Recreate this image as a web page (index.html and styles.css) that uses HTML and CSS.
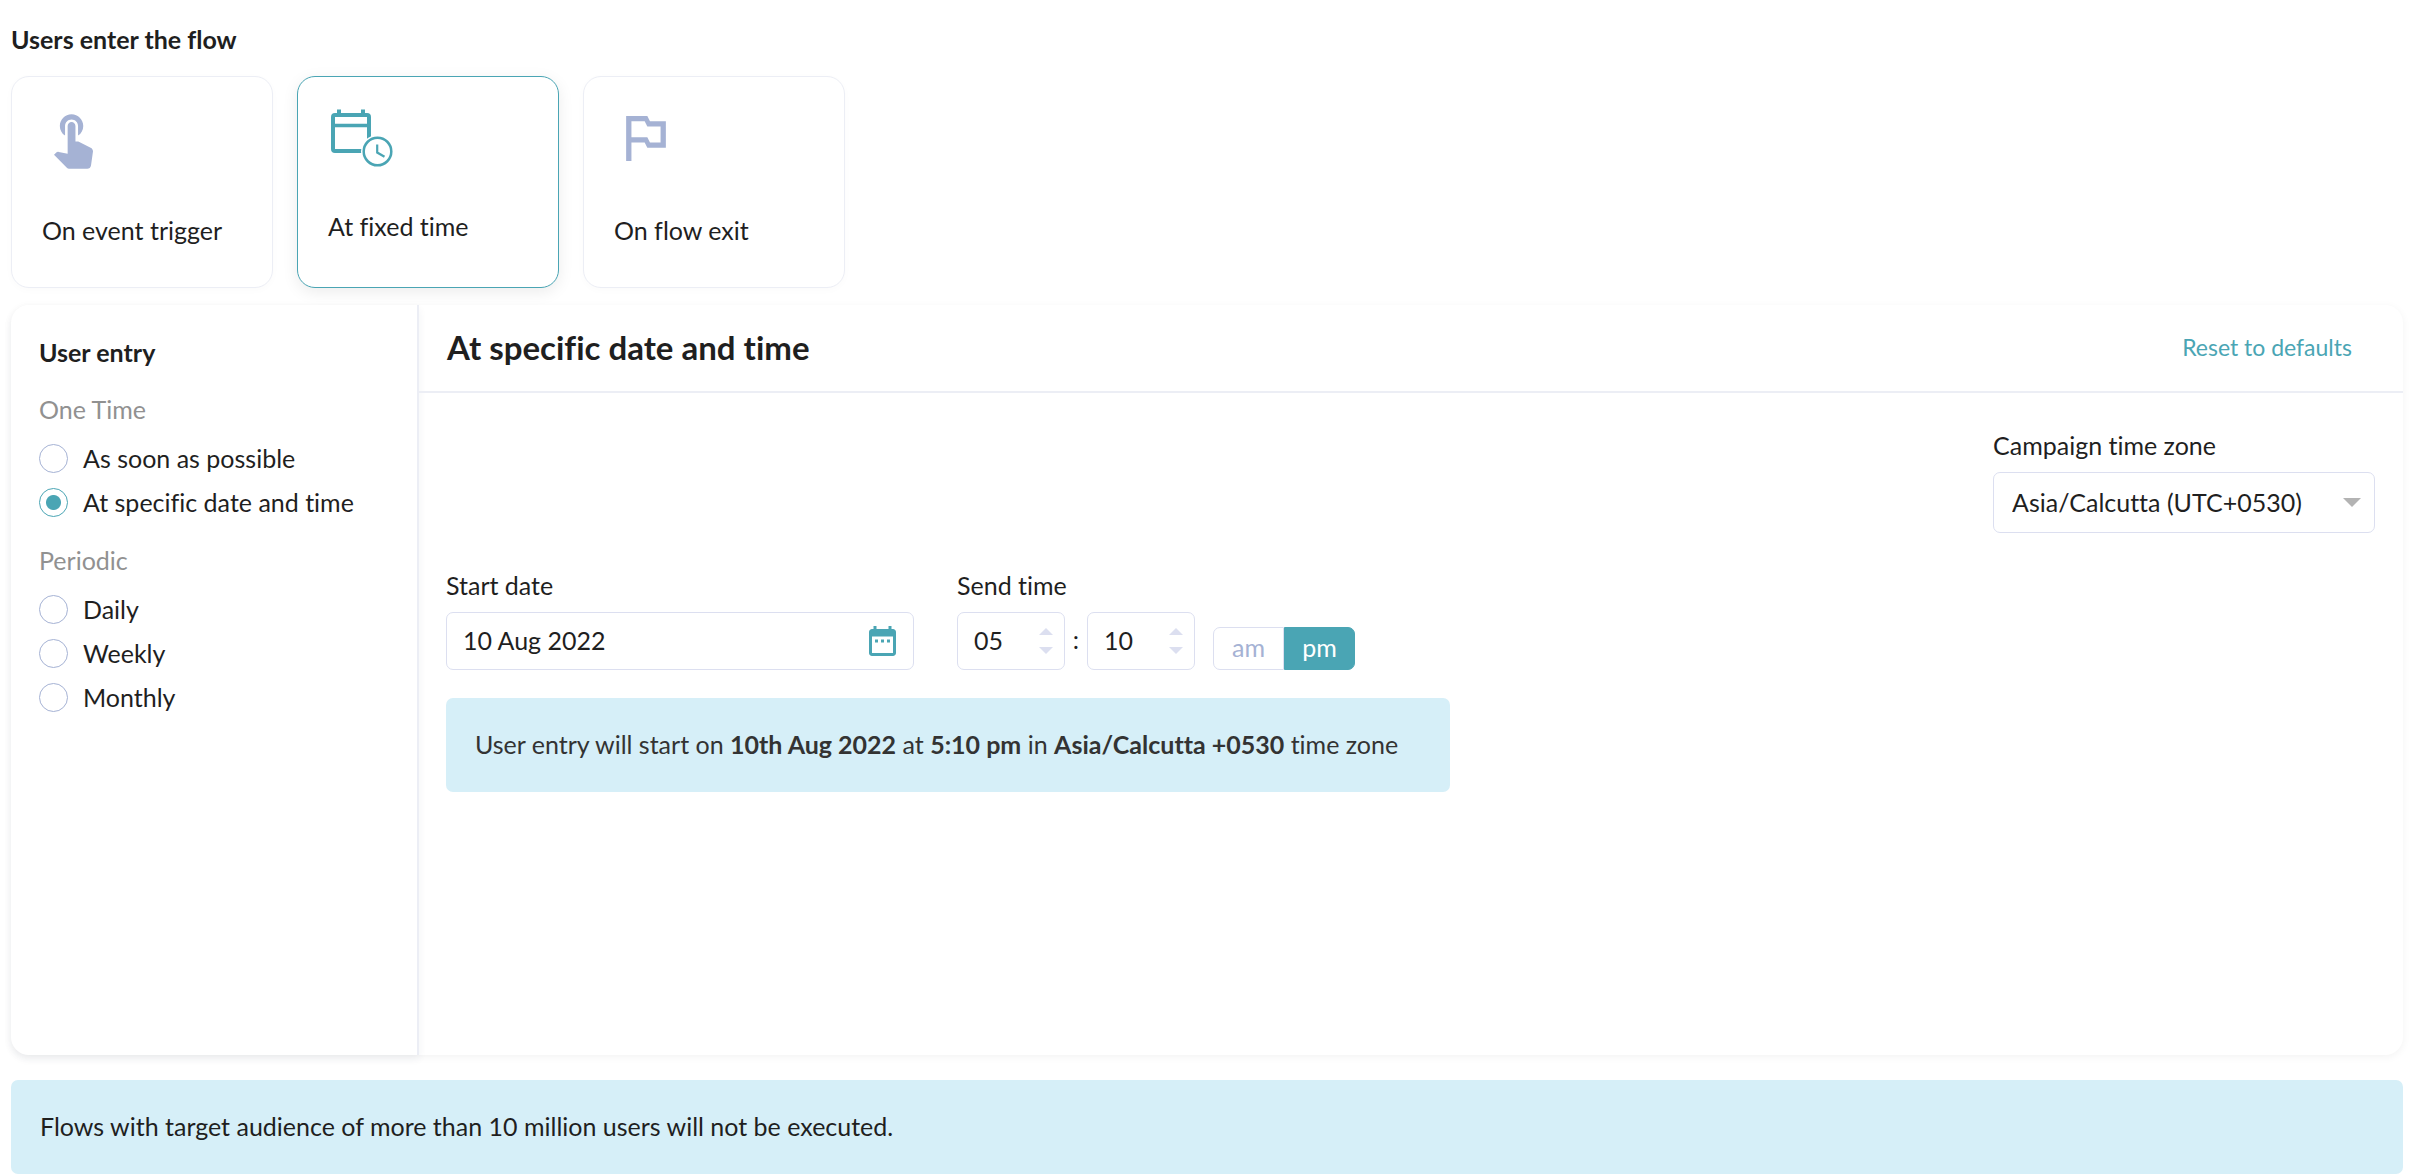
FILE: index.html
```html
<!DOCTYPE html>
<html lang="en">
<head>
<meta charset="utf-8">
<meta name="viewport" content="width=device-width, initial-scale=1">
<title>Users enter the flow</title>
<link rel="stylesheet" href="styles.css">
</head>
<body>
<main class="page">
  <h1 class="page-title">Users enter the flow</h1>

  <div class="triggers">
    <button type="button" class="trigger" aria-pressed="false">
      <span class="trigger-icon">
        <svg class="icon-touch" viewBox="4.75 3 15 21" aria-hidden="true"><path fill="currentColor" d="M9 11.24V7.5C9 6.12 10.12 5 11.5 5S14 6.12 14 7.5v3.74c1.21-.81 2-2.18 2-3.74C16 5.01 13.99 3 11.5 3S7 5.01 7 7.5c0 1.56.79 2.93 2 3.74zm9.84 4.63l-4.54-2.26c-.17-.07-.35-.11-.54-.11H13v-6c0-.83-.67-1.5-1.5-1.5S10 6.67 10 7.5v10.74l-3.43-.72c-.08-.01-.15-.03-.24-.03-.31 0-.59.13-.79.33l-.79.8 4.94 4.94c.27.27.65.44 1.06.44h6.79c.75 0 1.33-.55 1.44-1.28l.75-5.27c.01-.07.02-.14.02-.2 0-.62-.38-1.16-.91-1.38z"/></svg>
      </span>
      <span>On event trigger</span>
    </button>
    <button type="button" class="trigger trigger-active" aria-pressed="true">
      <span class="trigger-icon">
        <svg class="icon-schedule" viewBox="0 0 63 58" aria-hidden="true">
          <g fill="none" stroke="currentColor">
            <rect x="2" y="6" width="36" height="36" rx="2" stroke-width="4"/>
            <path d="M2 16.500H38" stroke-width="3.400"/>
            <path d="M8 0.500V6M32 0.500V6" stroke-width="4"/>
            <circle cx="46.500" cy="42.500" r="16.500" fill="#fff" stroke="none"/>
            <circle cx="46.500" cy="42.500" r="13.800" stroke-width="2.500"/>
            <path d="M46.200 35.500V43.500L53.500 47.800" stroke-width="2.200"/>
          </g>
        </svg>
      </span>
      <span>At fixed time</span>
    </button>
    <button type="button" class="trigger" aria-pressed="false">
      <span class="trigger-icon">
        <svg class="icon-flag" viewBox="5 3.25 15 17.75" aria-hidden="true"><path fill="currentColor" d="M14 6l-1-2H5v17h2v-7h5l1 2h7V6h-6zm4 8h-4l-1-2H7V6h5l1 2h5v6z"/></svg>
      </span>
      <span>On flow exit</span>
    </button>
  </div>

  <section class="panel">
    <aside class="sidebar">
      <h2 class="sidebar-title">User entry</h2>
      <fieldset class="group">
        <legend class="group-title">One Time</legend>
        <label class="option"><input class="radio" type="radio" name="entry">As soon as possible</label>
        <label class="option"><input class="radio" type="radio" name="entry" checked>At specific date and time</label>
      </fieldset>
      <fieldset class="group">
        <legend class="group-title">Periodic</legend>
        <label class="option"><input class="radio" type="radio" name="entry">Daily</label>
        <label class="option"><input class="radio" type="radio" name="entry">Weekly</label>
        <label class="option"><input class="radio" type="radio" name="entry">Monthly</label>
      </fieldset>
    </aside>

    <div class="content">
      <header class="content-header">
        <h2 class="content-title">At specific date and time</h2>
        <a class="reset" href="#">Reset to defaults</a>
      </header>
      <div class="content-body">
        <div class="field zone">
          <label for="zone">Campaign time zone</label>
          <div class="select-wrap">
            <select class="control select" id="zone"><option>Asia/Calcutta (UTC+0530)</option></select>
            <svg class="caret" viewBox="0 0 18 9" aria-hidden="true"><path fill="currentColor" d="M0 0h18L9 9z"/></svg>
          </div>
        </div>

        <div class="schedule">
          <div class="field date">
            <label for="date">Start date</label>
            <div class="control combo">
              <input class="date-input" id="date" type="text" value="10 Aug 2022">
              <button type="button" class="icon-button" aria-label="Open calendar">
                <svg class="icon-date" viewBox="3 2 18 20" aria-hidden="true"><path fill="currentColor" d="M9 11H7v2h2v-2zm4 0h-2v2h2v-2zm4 0h-2v2h2v-2zm2-7h-1V2h-2v2H8V2H6v2H5c-1.110 0-1.990.9-1.990 2L3 20c0 1.100.89 2 2 2h14c1.100 0 2-.9 2-2V6c0-1.100-.9-2-2-2zm0 16H5V9h14v11z"/></svg>
              </button>
            </div>
          </div>
          <div class="field">
            <label for="hour">Send time</label>
            <div class="time">
              <div class="control combo spinner">
                <input class="number" id="hour" type="text" inputmode="numeric" value="05">
                <div class="steps">
                  <button type="button" class="step" aria-label="Hour up"><svg viewBox="0 0 14 7" aria-hidden="true"><path fill="currentColor" d="M0 7h14L7 0z"/></svg></button>
                  <button type="button" class="step" aria-label="Hour down"><svg viewBox="0 0 14 7" aria-hidden="true"><path fill="currentColor" d="M0 0h14L7 7z"/></svg></button>
                </div>
              </div>
              <span class="colon">:</span>
              <div class="control combo spinner">
                <input class="number" type="text" inputmode="numeric" value="10" aria-label="Minutes">
                <div class="steps">
                  <button type="button" class="step" aria-label="Minutes up"><svg viewBox="0 0 14 7" aria-hidden="true"><path fill="currentColor" d="M0 7h14L7 0z"/></svg></button>
                  <button type="button" class="step" aria-label="Minutes down"><svg viewBox="0 0 14 7" aria-hidden="true"><path fill="currentColor" d="M0 0h14L7 7z"/></svg></button>
                </div>
              </div>
              <div class="meridiem">
                <button type="button" class="half" aria-pressed="false">am</button>
                <button type="button" class="half half-active" aria-pressed="true">pm</button>
              </div>
            </div>
          </div>
        </div>

        <p class="notice summary">User entry will start on <b>10th Aug 2022</b> at <b>5:10 pm</b> in <b>Asia/Calcutta +0530</b> time zone</p>
      </div>
    </div>
  </section>

  <p class="notice">Flows with target audience of more than 10 million users will not be executed.</p>
</main>
</body>
</html>
```

FILE: styles.css
```css
:root {
  --teal: #4aa5b4;
  --periwinkle: #a5b2d4;
  --outline: #dcdff0;
  --divider: #eceef5;
  --info: #d6eff8;
  --ink: #1f1f1f;
}

* { box-sizing: border-box; }

body {
  margin: 0;
  background: #fff;
  color: var(--ink);
  font: 400 25px/32px Lato, "Liberation Sans", sans-serif;
  font-variant-ligatures: none;
}

button, input, select { font: inherit; font-variant-ligatures: none; color: inherit; }
button { padding: 0; border: 0; background: none; cursor: pointer; }
h1, h2, p { margin: 0; }

.page { padding: 23px 28px 0 11px; }

.page-title { font-size: 25px; line-height: 32px; font-weight: 700; }

.triggers { display: flex; gap: 24px; margin-top: 21px; }

.trigger {
  display: flex;
  flex-direction: column;
  justify-content: flex-start;
  width: 262px;
  height: 212px;
  padding: 32px 30px;
  border: 1px solid var(--divider);
  border-radius: 18px;
  background: #fff;
  box-shadow: 0 2px 8px rgba(0, 0, 0, 0.02);
  text-align: left;
}
.trigger-active {
  border-color: var(--teal);
  box-shadow: 0 4px 16px rgba(0, 0, 0, 0.08);
}
.trigger-icon { display: flex; height: 105px; padding: 5px 12px; color: var(--periwinkle); }
.trigger-active .trigger-icon { height: 101px; padding: 0 3px; color: var(--teal); }
.icon-touch { width: 39px; height: 55px; }
.icon-schedule { width: 63px; height: 58px; }
.icon-flag { width: 40px; height: 47px; }

.panel {
  display: flex;
  min-height: 750px;
  margin-top: 17px;
  border-radius: 18px;
  background: #fff;
  box-shadow: 0 2px 8px rgba(0, 0, 0, 0.05);
}

.sidebar {
  width: 408px;
  padding: 31px 28px;
  border-right: 2px solid var(--divider);
  border-radius: 18px 0 0 18px;
  box-shadow: 0 4px 8px rgba(40, 50, 90, 0.06);
}
.sidebar-title { font-size: 25px; line-height: 32px; font-weight: 700; }

.group { min-width: 0; margin: 0; padding: 0; border: 0; }
.group-title { padding: 25px 0 11px; color: #919191; }
.group + .group .group-title { padding-top: 20px; }
.option { display: flex; align-items: center; gap: 15px; height: 44px; }
.radio {
  appearance: none;
  width: 29px;
  height: 29px;
  margin: 0;
  border: 1px solid var(--periwinkle);
  border-radius: 50%;
}
.radio:checked {
  border-color: var(--teal);
  background: radial-gradient(circle, var(--teal) 7px, transparent 8px);
}

.content { flex: 1; }
.content-header {
  display: flex;
  align-items: center;
  justify-content: space-between;
  height: 88px;
  padding: 0 51px 3px 28px;
  border-bottom: 2px solid var(--divider);
}
.content-title { font-size: 33px; line-height: 40px; font-weight: 700; }
.reset { color: var(--teal); font-size: 23px; text-decoration: none; }

.content-body { padding: 36px 28px 0 27px; }

.field { display: flex; flex-direction: column; gap: 11px; }
.control { border: 1px solid var(--outline); border-radius: 7px; background: #fff; }

.zone { width: 382px; margin-left: auto; }
.select-wrap { display: grid; align-items: center; }
.select-wrap > * { grid-area: 1 / 1; }
.select { appearance: none; height: 61px; padding: 0 48px 2px 18px; }
.caret { justify-self: end; width: 18px; height: 9px; margin-right: 14px; color: #b3b3b3; pointer-events: none; }

.schedule { display: flex; gap: 43px; margin-top: 36px; }
.date { width: 468px; }
.combo { display: flex; align-items: center; height: 58px; padding: 0 17px 0 16px; }
.combo input { min-width: 0; flex: 1; padding: 0 0 2px; border: 0; outline: 0; background: none; }
.icon-button { display: flex; color: var(--teal); }
.icon-date { width: 27px; height: 30px; }

.time { display: flex; align-items: flex-end; }
.spinner { width: 108px; padding-right: 11px; }
.steps { display: flex; flex-direction: column; gap: 12px; color: var(--outline); }
.step { display: flex; }
.step svg { width: 14px; height: 7px; }
.colon { width: 22px; height: 47px; text-align: center; }

.meridiem { display: flex; margin-left: 18px; }
.half {
  width: 71px;
  height: 43px;
  padding-bottom: 3px;
  border: 1px solid var(--outline);
  border-radius: 7px 0 0 7px;
  color: var(--periwinkle);
}
.half-active {
  border-color: var(--teal);
  border-radius: 0 7px 7px 0;
  background: var(--teal);
  color: #fff;
}

.notice {
  margin-top: 25px;
  padding: 30px 29px 32px;
  border-radius: 7px;
  background: var(--info);
}
.summary { max-width: 1004px; margin-top: 28px; color: #333; }
```
